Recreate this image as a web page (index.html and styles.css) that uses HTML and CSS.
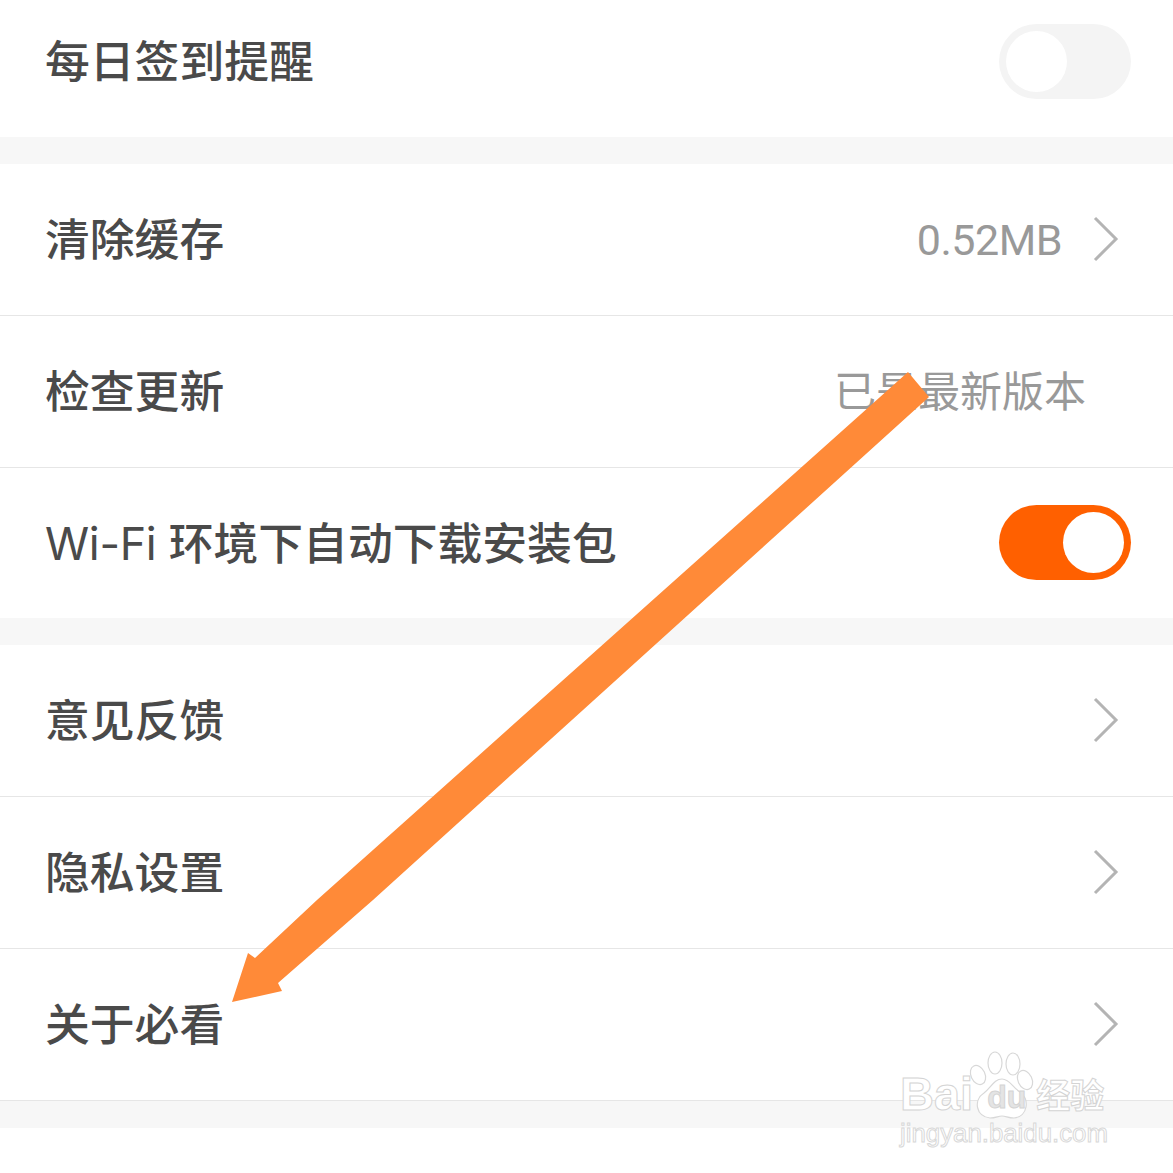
FILE: index.html
```html
<!DOCTYPE html>
<html lang="zh-CN">
<head>
    <meta charset="UTF-8">
    <meta name="viewport" content="width=device-width, initial-scale=1.0">
    <title>设置</title>
    <link rel="stylesheet" href="styles.css">
</head>
<body>
    <div class="settings">
        <!-- Reminder -->
        <div class="group">
            <div class="row row-first">
                <span class="label">每日签到提醒</span>
                <span class="switch"><span class="knob"></span></span>
            </div>
        </div>

        <!-- App -->
        <div class="group">
            <div class="row">
                <span class="label">清除缓存</span>
                <span class="value">0.52MB</span>
                <svg class="chevron" viewBox="0 0 26 46"><path d="M2 2 L23 23 L2 44"/></svg>
            </div>
            <div class="row">
                <span class="label">检查更新</span>
                <span class="value value-plain">已是最新版本</span>
            </div>
            <div class="row row-switch">
                <span class="label"><span class="latin">Wi-Fi </span>环境下自动下载安装包</span>
                <span class="switch switch-on"><span class="knob"></span></span>
            </div>
        </div>

        <!-- About -->
        <div class="group">
            <div class="row">
                <span class="label">意见反馈</span>
                <svg class="chevron" viewBox="0 0 26 46"><path d="M2 2 L23 23 L2 44"/></svg>
            </div>
            <div class="row">
                <span class="label">隐私设置</span>
                <svg class="chevron" viewBox="0 0 26 46"><path d="M2 2 L23 23 L2 44"/></svg>
            </div>
            <div class="row">
                <span class="label">关于必看</span>
                <svg class="chevron" viewBox="0 0 26 46"><path d="M2 2 L23 23 L2 44"/></svg>
            </div>
        </div>
    </div>

    <!-- Annotation arrow drawn over the list -->
    <svg class="arrow" viewBox="0 0 1173 1173">
        <polygon points="908,372 929,397 373,900 278,983 282,991 232,1002 248,953 255,958 317,900"/>
    </svg>

    <!-- Watermark -->
    <div class="watermark">
        <svg class="paw" viewBox="0 0 70 70">
            <ellipse cx="8" cy="27" rx="7" ry="10" transform="rotate(-25 8 27)"/>
            <ellipse cx="25" cy="15" rx="7" ry="11"/>
            <ellipse cx="43" cy="16" rx="7" ry="11"/>
            <ellipse cx="55" cy="32" rx="7" ry="10" transform="rotate(-25 55 32)"/>
            <path d="M32 31 C40 31 43 40 50 44 C60 50 58 69 44 70 C38 70 36 68 32 68 C28 68 26 70 20 70 C6 69 3 52 14 45 C21 40 24 31 32 31 Z"/>
        </svg>
        <div class="wm-main"><span>Bai</span><span class="wm-du">du</span><span class="wm-cn">经验</span></div>
        <div class="wm-url">jingyan.baidu.com</div>
    </div>
</body>
</html>
```

FILE: styles.css
```css
html, body {
    margin: 0;
    padding: 0;
    background-color: white;
}

body {
    font-family: "Noto Sans CJK SC", "Noto Sans", sans-serif;
    height: 1173px;
    overflow: hidden;
    position: relative;
}

.group {
    border-bottom: 27px solid #f7f7f7;
}

.row {
    display: flex;
    align-items: center;
    height: 151px;
    padding: 0 42px 0 45px;
    border-bottom: 1px solid #e6e6e6;
}

.group .row:last-child {
    border-bottom: none;
}

.group:last-child .row:last-child {
    border-bottom: 1px solid #e6e6e6;
}

.row-first {
    height: 123px;
    padding-bottom: 14px;
}

.row-switch {
    height: 150px;
}

.label {
    flex: 1;
    font-size: 44.8px;
    font-weight: 500;
    color: #4a4a4a;
    white-space: nowrap;
    margin-bottom: 6px;
}

.latin {
    font-family: Inter, sans-serif;
    font-weight: 400;
    letter-spacing: -0.3px;
}

.value {
    font-family: Roboto, sans-serif;
    font-size: 43px;
    letter-spacing: -0.5px;
    color: #999;
    margin-right: 31px;
}

.value-plain {
    font-family: "Noto Sans CJK SC", sans-serif;
    font-size: 42px;
    letter-spacing: 0;
    margin-right: 45px;
    margin-bottom: 6px;
}

.chevron {
    width: 26px;
    height: 46px;
    margin-right: 12px;
    margin-bottom: 1px;
    fill: none;
    stroke: #b4b4b4;
    stroke-width: 3;
}

.switch {
    display: block;
    width: 132px;
    height: 75px;
    border-radius: 38px;
    background-color: #f4f4f4;
    position: relative;
}

.knob {
    position: absolute;
    top: 7px;
    left: 7px;
    width: 61px;
    height: 61px;
    border-radius: 50%;
    background-color: white;
}

.switch-on {
    background-color: #ff6000;
    margin-bottom: 1px;
}

.switch-on .knob {
    left: 64px;
}

.arrow {
    position: absolute;
    top: 0;
    left: 0;
    width: 1173px;
    height: 1173px;
    fill: #ff8a38;
}

.watermark {
    position: absolute;
    left: 900px;
    top: 1046px;
    width: 215px;
}

.paw {
    position: absolute;
    left: 70px;
    top: 2px;
    width: 70px;
    height: 70px;
    fill: white;
    stroke: #d8d8d8;
    stroke-width: 1.2;
    overflow: visible;
}

.wm-main {
    position: relative;
    margin-top: 22px;
    display: flex;
    align-items: center;
    height: 50px;
    font-family: "Liberation Sans", sans-serif;
    font-weight: bold;
    font-size: 47px;
    color: white;
    -webkit-text-stroke: 1px #d4d4d4;
}

.wm-du {
    font-size: 32px;
    margin: 8px 10px 0 14px;
    color: #e4e4e4;
}

.wm-cn {
    font-family: "Noto Sans CJK SC", sans-serif;
    font-weight: 700;
    font-size: 34px;
}

.wm-url {
    font-family: "Liberation Sans", sans-serif;
    font-size: 25.8px;
    line-height: 30px;
    color: white;
    -webkit-text-stroke: 1px #d8d8d8;
    white-space: nowrap;
}
```
